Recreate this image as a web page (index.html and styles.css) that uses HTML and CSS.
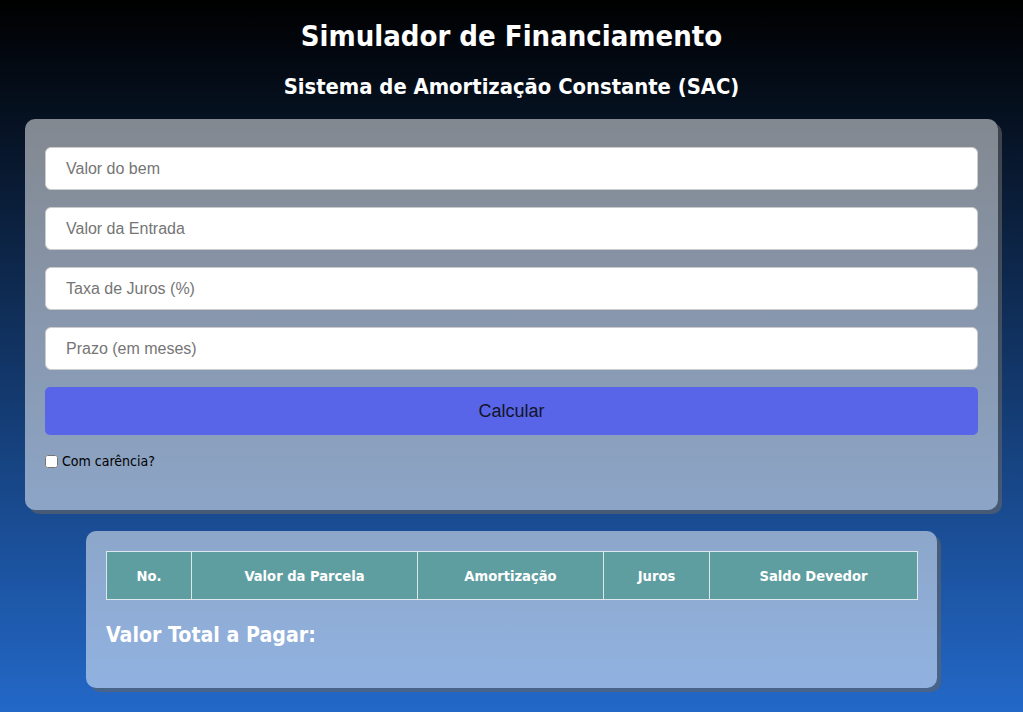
FILE: index.html
```html
<!DOCTYPE html>
<html lang="pt-BR">
<head>
<meta charset="utf-8">
<title>Simulador de Financiamento</title>
<link rel="stylesheet" href="styles.css">
</head>
<body>
  <h1 class="title">Simulador de Financiamento</h1>
  <h2 class="subtitle">Sistema de Amortização Constante (SAC)</h2>
  <form class="card form-card">
    <input class="field" type="text" placeholder="Valor do bem">
    <input class="field" type="text" placeholder="Valor da Entrada">
    <input class="field" type="text" placeholder="Taxa de Juros (%)">
    <input class="field" type="text" placeholder="Prazo (em meses)">
    <button class="btn" type="button">Calcular</button>
    <label class="check"><input type="checkbox" class="check-box"> Com carência?</label>
  </form>
  <section class="card result-card">
    <table class="table">
      <thead>
        <tr>
          <th class="c1">No.</th>
          <th class="c2">Valor da Parcela</th>
          <th class="c3">Amortização</th>
          <th class="c4">Juros</th>
          <th class="c5">Saldo Devedor</th>
        </tr>
      </thead>
    </table>
    <h3 class="total">Valor Total a Pagar:</h3>
  </section>
</body>
</html>
```
FILE: styles.css
```css
html, body {
  margin: 0;
  padding: 0;
}
body {
  min-height: 712px;
  background: linear-gradient(to bottom, #000000 0%, #2368c8 100%);
  font-family: "DejaVu Sans Condensed", "DejaVu Sans", sans-serif;
  color: #fff;
  overflow: hidden;
  padding-top: 18px;
  box-sizing: border-box;
}
.title {
  margin: 0;
  text-align: center;
  font-size: 29px;
  line-height: 36px;
  font-weight: bold;
}
.subtitle {
  margin: 19px 0 0;
  text-align: center;
  font-size: 21.8px;
  line-height: 28px;
  font-weight: bold;
}
.card {
  background: rgba(255, 255, 255, 0.5);
  border-radius: 10px;
  box-shadow: 4px 4px 0 rgba(100, 100, 100, 0.6);
  box-sizing: border-box;
}
.form-card {
  margin: 18px 25px 0;
  padding: 28px 20px 40px;
  display: flex;
  flex-direction: column;
  gap: 17px;
}
.field {
  display: block;
  height: 43px;
  box-sizing: border-box;
  border: 1px solid #cccccc;
  border-radius: 6px;
  background: #fff;
  padding: 0 20px;
  font-family: "Liberation Sans", Arial, sans-serif;
  font-size: 16px;
  color: #333;
  outline: none;
}
.field::placeholder {
  color: #757575;
}
.btn {
  height: 48px;
  border: none;
  border-radius: 5px;
  background: #5865e9;
  color: #141428;
  font-family: "Liberation Sans", Arial, sans-serif;
  font-size: 18px;
  cursor: pointer;
}
.check {
  display: flex;
  align-items: center;
  gap: 4px;
  color: #000;
  font-size: 14px;
  line-height: 18px;
}
.check-box {
  margin: 0;
  width: 13px;
  height: 13px;
}
.result-card {
  width: 851px;
  margin: 21px auto 0;
  padding: 20px 20px 40px;
}
.table {
  width: 811px;
  border-collapse: collapse;
  table-layout: fixed;
}
.table th {
  background: #5f9ea0;
  border: 1px solid #dde8ec;
  height: 47px;
  padding: 0;
  font-size: 14.6px;
  font-weight: bold;
  color: #fff;
  text-align: center;
}
.c1 { width: 84px; }
.c2 { width: 225px; }
.c3 { width: 185px; }
.c4 { width: 105px; }
.c5 { width: 207px; }
.total {
  margin: 22px 0 0;
  font-size: 21.2px;
  line-height: 26px;
  font-weight: bold;
  color: #fff;
}
```
